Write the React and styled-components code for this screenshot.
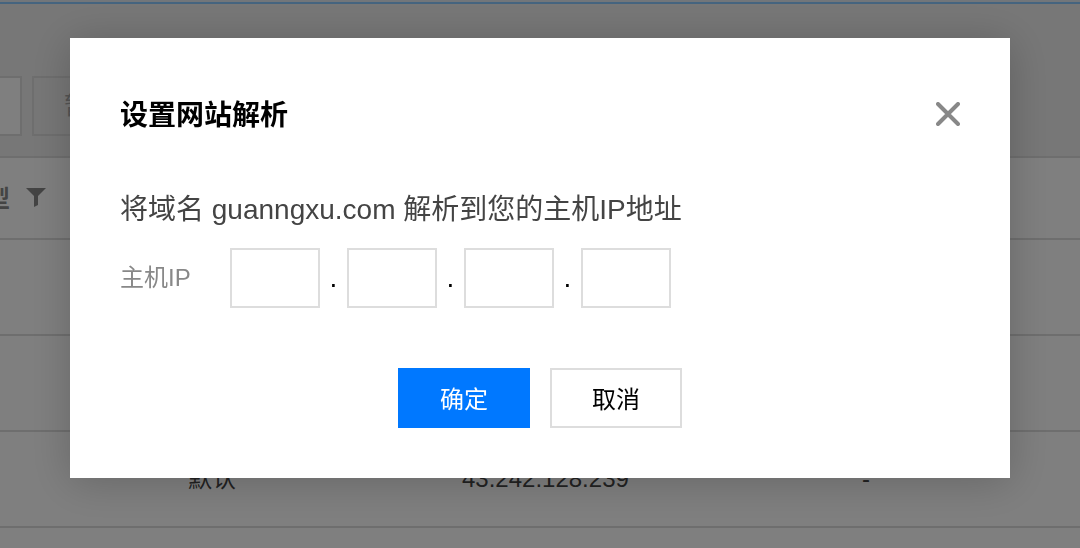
import React from "react";
import styled, { createGlobalStyle } from "styled-components";

const GlobalStyle = createGlobalStyle`
  * { box-sizing: border-box; }
  body {
    margin: 0;
    background: #fff;
    color: #444;
    font-family: "Liberation Sans", "Noto Sans CJK SC", sans-serif;
    font-size: 24px;
    line-height: 36px;
  }
  button, input { font: inherit; border-radius: 0; margin: 0; }
`;

const Page = styled.div`
  overflow: hidden;
`;

const TopStrip = styled.div`
  height: 2px;
  background: #e4ecf4;
`;

const Toolbar = styled.header`
  display: flex;
  gap: 10px;
  padding: 72px 0 20px;
  border-top: 2px solid #8ac8ff;
  background: #eee;
`;

const FilterButton = styled.button`
  width: ${(p) => p.$width};
  height: 60px;
  padding: ${(p) => (p.$cut ? "0" : "0 30px")};
  text-align: left;
  border: 2px solid #ddd;
  border-left-width: ${(p) => (p.$cut ? "0" : "2px")};
  background: ${(p) => (p.$cut ? "#fff" : "#eee")};
  color: #aaa;
`;

const HostTable = styled.table`
  width: 100%;
  table-layout: fixed;
  border-collapse: collapse;
  background: #fff;
  text-align: left;

  th, td {
    padding: 0;
    border-bottom: 2px solid #ddd;
  }
  th {
    height: 82px;
    border-top: 2px solid #ddd;
    color: #888;
  }
  td { height: 96px; }
`;

const HeadLabel = styled.span`
  display: flex;
  align-items: center;
  gap: 16px;
  padding-top: 2px;
`;

const Clipped = styled.span`
  display: flex;
  justify-content: flex-end;
  width: 10px;
  overflow: hidden;
  white-space: nowrap;
`;

const Backdrop = styled.div`
  position: fixed;
  inset: 0;
  display: flex;
  align-items: flex-start;
  justify-content: center;
  padding: 38px 70px;
  background: rgba(0, 0, 0, 0.5);
`;

const Dialog = styled.section`
  flex: 1;
  max-width: 1200px;
  padding: 50px;
  background: #fff;
  box-shadow: 0 4px 40px rgba(0, 0, 0, 0.2);
`;

const DialogHead = styled.div`
  display: flex;
  align-items: center;
  justify-content: space-between;
  height: 52px;
`;

const Title = styled.h1`
  margin: 0;
  padding-top: 4px;
  color: #000;
  font-size: 28px;
  line-height: 40px;
`;

const CloseButton = styled.button`
  display: flex;
  padding: 0;
  border: 0;
  background: none;
  color: #888;
`;

const Message = styled.p`
  margin: 50px 0 18px;
  font-size: 28px;
  line-height: 40px;
`;

const IpRow = styled.fieldset`
  display: flex;
  align-items: center;
  min-width: 0;
  margin: 0;
  padding: 0;
  border: 0;
  color: #000;
`;

const IpLabel = styled.label`
  width: 110px;
  color: #888;
`;

const IpInput = styled.input`
  width: 90px;
  height: 60px;
  padding: 0 10px;
  border: 2px solid #ddd;
  background: #fff;
`;

const Dot = styled.span`
  width: 27px;
  font-size: 28px;
  text-align: center;
`;

const Actions = styled.div`
  display: flex;
  justify-content: center;
  gap: 20px;
  margin-top: 60px;
`;

const ActionButton = styled.button`
  width: 132px;
  height: 60px;
  padding: 4px 0 0;
  border: 2px solid ${(p) => (p.$primary ? "#0078ff" : "#ddd")};
  background: ${(p) => (p.$primary ? "#0078ff" : "#fff")};
  color: ${(p) => (p.$primary ? "#fff" : "#000")};
`;

const parts = [1, 2, 3, 4];

export default function App() {
  return (
    <>
      <GlobalStyle />
      <Page>
        <TopStrip />
        <Toolbar>
          <FilterButton $cut $width="22px" aria-label="筛选" />
          <FilterButton $width="132px" disabled>暂停</FilterButton>
        </Toolbar>
        <HostTable>
          <colgroup>
            <col width="188" />
            <col width="274" />
            <col width="400" />
            <col />
          </colgroup>
          <thead>
            <tr>
              <th>
                <HeadLabel>
                  <Clipped>型</Clipped>
                  <svg width="20" height="22" viewBox="0 0 20 22" fill="currentColor" aria-hidden="true">
                    <path d="M0 0H20L12 8V17L8 19V8Z" />
                  </svg>
                </HeadLabel>
              </th>
              <th /><th /><th />
            </tr>
          </thead>
          <tbody>
            <tr><td /><td /><td /><td /></tr>
            <tr><td /><td /><td /><td /></tr>
            <tr><td /><td>默认</td><td>43.242.128.239</td><td>-</td></tr>
          </tbody>
        </HostTable>
      </Page>
      <Backdrop>
        <Dialog role="dialog" aria-modal="true" aria-labelledby="dialog-title">
          <DialogHead>
            <Title id="dialog-title">设置网站解析</Title>
            <CloseButton aria-label="关闭">
              <svg width="24" height="24" viewBox="0 0 24 24" fill="none" stroke="currentColor" strokeWidth="4" strokeLinecap="round" aria-hidden="true">
                <path d="M2 2L22 22M22 2L2 22" />
              </svg>
            </CloseButton>
          </DialogHead>
          <Message>将域名 guanngxu.com 解析到您的主机IP地址</Message>
          <IpRow>
            <IpLabel htmlFor="ip-1">主机IP</IpLabel>
            {parts.map((n) => (
              <React.Fragment key={n}>
                {n > 1 && <Dot>.</Dot>}
                <IpInput id={`ip-${n}`} inputMode="numeric" maxLength={3} aria-label={n > 1 ? `主机IP ${n}` : undefined} />
              </React.Fragment>
            ))}
          </IpRow>
          <Actions>
            <ActionButton $primary>确定</ActionButton>
            <ActionButton>取消</ActionButton>
          </Actions>
        </Dialog>
      </Backdrop>
    </>
  );
}
